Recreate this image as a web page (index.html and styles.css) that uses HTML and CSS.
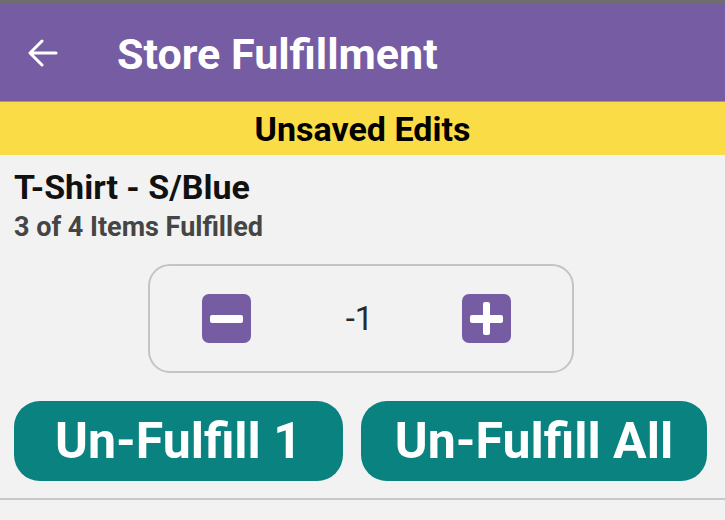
FILE: index.html
```html
<!DOCTYPE html>
<html>
<head>
<meta charset="utf-8">
<link rel="stylesheet" href="styles.css">
</head>
<body>
<div class="statusbar"></div>
<header class="appbar">
  <svg class="back" width="30" height="28" viewBox="0 0 30 28" fill="none" stroke="#fff" stroke-width="3" stroke-linecap="round" stroke-linejoin="round">
    <path d="M28 14H3M14 2L2 14l12 12"/>
  </svg>
  <h1 class="title">Store Fulfillment</h1>
</header>
<div class="banner">Unsaved Edits</div>
<main class="content">
  <div class="item-name">T-Shirt - S/Blue</div>
  <div class="item-sub">3 of 4 Items Fulfilled</div>
  <div class="stepper">
    <div class="step-btn"><span class="bar-h"></span></div>
    <div class="qty">-1</div>
    <div class="step-btn"><span class="bar-h"></span><span class="bar-v"></span></div>
  </div>
  <div class="actions">
    <button class="action">Un-Fulfill 1</button>
    <button class="action">Un-Fulfill All</button>
  </div>
</main>
<div class="divider"></div>
</body>
</html>
```
FILE: styles.css
```css
html, body {
  margin: 0;
  padding: 0;
}
body {
  background: #f2f2f2;
  font-family: Roboto, "Liberation Sans", sans-serif;
  width: 725px;
  height: 520px;
  overflow: hidden;
}
.statusbar {
  height: 3px;
  background: #6e6e6e;
}
.appbar {
  height: 98px;
  background: #765ca3;
  display: flex;
  align-items: center;
  padding-left: 28px;
  box-sizing: border-box;
}
.back {
  display: block;
  margin-top: 2px;
}
.title {
  margin: 4px 0 0 59px;
  color: #fff;
  font-size: 43px;
  font-weight: 700;
  line-height: 1;
}
.banner {
  height: 54px;
  background: #f9dc46;
  border-top: 1px solid #b39a5a;
  box-sizing: border-box;
  display: flex;
  align-items: center;
  justify-content: center;
  font-size: 34px;
  font-weight: 700;
  color: #000;
}
.content {
  padding: 12px 14px 0;
}
.item-name {
  font-size: 34px;
  font-weight: 700;
  color: #111;
  line-height: 40px;
}
.item-sub {
  font-size: 27px;
  font-weight: 700;
  color: #454545;
  line-height: 32px;
  margin-top: 4px;
}
.stepper {
  width: 426px;
  height: 109px;
  box-sizing: border-box;
  border: 2px solid #c4c4c4;
  border-radius: 22px;
  margin: 21px auto 0;
  display: flex;
  align-items: center;
  justify-content: space-between;
  padding: 0 60px 0 52px;
  position: relative;
  left: -2px;
}
.step-btn {
  width: 49px;
  height: 49px;
  border-radius: 7px;
  background: #765ca3;
  position: relative;
}
.bar-h, .bar-v {
  position: absolute;
  background: #fff;
  border-radius: 2px;
}
.bar-h {
  left: 8px;
  right: 8px;
  top: 21px;
  height: 8px;
}
.bar-v {
  top: 8px;
  bottom: 8px;
  left: 21px;
  width: 7px;
}
.qty {
  font-size: 33px;
  color: #2a2a2a;
  margin-left: 6px;
}
.actions {
  display: grid;
  grid-template-columns: 329px 346px;
  gap: 18px;
  margin-top: 28px;
}
.action {
  height: 80px;
  border: none;
  border-radius: 26px;
  background: #0a8280;
  color: #fff;
  font-family: Roboto, "Liberation Sans", sans-serif;
  font-size: 50px;
  font-weight: 700;
  padding: 0;
}
.divider {
  height: 2px;
  background: #c8c8c8;
  margin-top: 17px;
}
```
